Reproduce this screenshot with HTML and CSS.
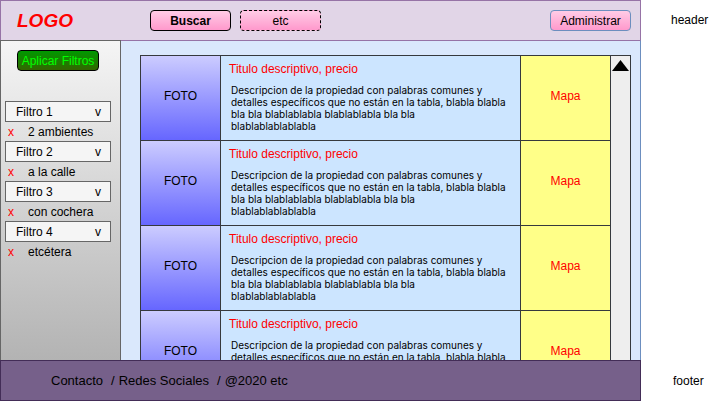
FILE: index.html
```html
<!DOCTYPE html>
<html lang="es">
<head>
<meta charset="utf-8">
<title>Buscador de propiedades</title>
<link rel="stylesheet" href="styles.css">
</head>
<body>
<div class="page">
  <header class="header">
    <a class="logo" href="#">LOGO</a>
    <nav class="nav">
      <button class="btn btn-active" type="button">Buscar</button>
      <button class="btn btn-dashed" type="button">etc</button>
    </nav>
    <button class="btn btn-admin" type="button">Administrar</button>
  </header>
  <div class="note">header</div>

  <div class="main">
    <aside class="sidebar">
      <button class="btn btn-apply" type="button">Aplicar Filtros</button>
      <div class="filters">
        <div class="filter">
          <select class="select" aria-label="Filtro 1"><option>Filtro 1</option></select>
          <span class="arrow">v</span>
        </div>
        <div class="chosen"><button class="remove" type="button" aria-label="Quitar 2 ambientes">x</button><span>2 ambientes</span></div>
        <div class="filter">
          <select class="select" aria-label="Filtro 2"><option>Filtro 2</option></select>
          <span class="arrow">v</span>
        </div>
        <div class="chosen"><button class="remove" type="button" aria-label="Quitar a la calle">x</button><span>a la calle</span></div>
        <div class="filter">
          <select class="select" aria-label="Filtro 3"><option>Filtro 3</option></select>
          <span class="arrow">v</span>
        </div>
        <div class="chosen"><button class="remove" type="button" aria-label="Quitar con cochera">x</button><span>con cochera</span></div>
        <div class="filter">
          <select class="select" aria-label="Filtro 4"><option>Filtro 4</option></select>
          <span class="arrow">v</span>
        </div>
        <div class="chosen"><button class="remove" type="button" aria-label="Quitar etcétera">x</button><span>etcétera</span></div>
      </div>
    </aside>

    <main class="content">
      <div class="results">
        <div class="list">
          <article class="item">
            <div class="photo">FOTO</div>
            <div class="info">
              <h2 class="title">Titulo descriptivo, precio</h2>
              <p class="text">Descripcion de la propiedad con palabras comunes y detalles específicos que no están en la tabla, blabla blabla bla bla blablablabla blablablabla bla bla<br>blablablablablabla</p>
            </div>
            <div class="map">Mapa</div>
          </article>
          <article class="item">
            <div class="photo">FOTO</div>
            <div class="info">
              <h2 class="title">Titulo descriptivo, precio</h2>
              <p class="text">Descripcion de la propiedad con palabras comunes y detalles específicos que no están en la tabla, blabla blabla bla bla blablablabla blablablabla bla bla<br>blablablablablabla</p>
            </div>
            <div class="map">Mapa</div>
          </article>
          <article class="item">
            <div class="photo">FOTO</div>
            <div class="info">
              <h2 class="title">Titulo descriptivo, precio</h2>
              <p class="text">Descripcion de la propiedad con palabras comunes y detalles específicos que no están en la tabla, blabla blabla bla bla blablablabla blablablabla bla bla<br>blablablablablabla</p>
            </div>
            <div class="map">Mapa</div>
          </article>
          <article class="item">
            <div class="photo">FOTO</div>
            <div class="info">
              <h2 class="title">Titulo descriptivo, precio</h2>
              <p class="text">Descripcion de la propiedad con palabras comunes y detalles específicos que no están en la tabla, blabla blabla bla bla blablablabla blablablabla bla bla<br>blablablablablabla</p>
            </div>
            <div class="map">Mapa</div>
          </article>
        </div>
        <div class="scrollbar">
          <button class="scroll-up" type="button" aria-label="Subir">
            <svg width="17" height="11" viewBox="0 0 17 11"><path d="M8.5 0L17 11H0Z"/></svg>
          </button>
        </div>
      </div>
    </main>
  </div>

  <footer class="footer">
    <a href="#">Contacto</a>
    <span class="sep">/</span>
    <a href="#">Redes Sociales</a>
    <span class="sep">/</span>
    <span>@2020 etc</span>
  </footer>
  <div class="note note-footer">footer</div>
</div>
</body>
</html>
```

FILE: styles.css
```css
* {
  box-sizing: border-box;
}

body {
  margin: 0;
  background: #fff;
  color: #000;
  font: 12px/14px "Liberation Sans", Arial, sans-serif;
}

a {
  color: inherit;
  text-decoration: none;
}

button,
select {
  margin: 0;
  padding: 0;
  color: inherit;
  font: inherit;
}

.page {
  display: grid;
  grid-template-columns: minmax(0, 1fr) 70px;
  grid-template-rows: 40px minmax(0, 1fr) 41px;
  height: 100vh;
}

.header {
  display: flex;
  align-items: center;
  padding: 0 9px 0 16px;
  border: 1px solid #9673a6;
  border-bottom: 0;
  background: #e1d5e7;
}

.logo {
  width: 133px;
  color: #f00;
  font-size: 19px;
  font-style: italic;
  font-weight: bold;
  line-height: 22px;
}

.nav {
  display: flex;
  flex: 1;
  gap: 9px;
}

.btn {
  height: 21px;
  border: 1px solid #000;
  border-radius: 4px;
  background: linear-gradient(#ffcce6, #ff99cc);
}

.nav .btn {
  width: 81px;
}

.btn-active {
  font-weight: bold;
}

.nav .btn-dashed {
  border-style: dashed;
}

.btn-admin {
  width: 81px;
  border-color: #6c8ebf;
}

.note {
  align-self: center;
  padding-left: 30px;
}

.note-footer {
  padding-left: 32px;
}

.main {
  grid-column: 1;
  display: flex;
  min-height: 0;
}

.sidebar {
  width: 121px;
  padding: 9px 9px 0 4px;
  border: 1px solid #666;
  border-bottom: 0;
  background: linear-gradient(#f5f5f5, #b3b3b3);
}

.btn-apply {
  display: block;
  width: 82px;
  margin: 0 0 30px 12px;
  background: linear-gradient(#009900, #336600);
  color: #0f0;
  white-space: nowrap;
}

.filter {
  position: relative;
}

.select {
  display: block;
  width: 100%;
  height: 21px;
  padding: 0 10px;
  border: 1px solid #666;
  border-radius: 0;
  appearance: none;
  background: #f5f5f5;
}

.arrow {
  position: absolute;
  top: 4px;
  right: 10px;
  pointer-events: none;
}

.chosen {
  display: flex;
  align-items: center;
  gap: 14px;
  height: 19px;
  padding-left: 3px;
}

.remove {
  border: 0;
  background: none;
  color: #f00;
}

.content {
  display: flex;
  flex: 1;
  min-width: 0;
  padding: 14px 9px 0 19px;
  border-top: 1px solid #9673a6;
  border-right: 1px solid #6c8ebf;
  background: #dae8fc;
}

.results {
  display: flex;
  flex: 1;
  min-width: 0;
  border: 1px solid #36393d;
  border-bottom: 0;
  overflow: hidden;
}

.list {
  flex: 1;
}

.item {
  display: flex;
  height: 85px;
  border-bottom: 1px solid #36393d;
}

.photo,
.map {
  display: flex;
  align-items: center;
  justify-content: center;
  padding-bottom: 4px;
}

.photo {
  width: 80px;
  border-right: 1px solid #36393d;
  background: linear-gradient(#ccccff, #6666ff);
}

.info {
  flex: 1;
  padding: 6px 8px 0 8px;
  background: #cce5ff;
}

.title {
  margin: 0 0 8px;
  color: #f00;
  font-size: 12px;
  font-weight: normal;
}

.text {
  margin: 0;
  padding-left: 2px;
  font-family: Inter, "Noto Sans", sans-serif;
  font-size: 10px;
  line-height: 12px;
}

.map {
  width: 90px;
  border-left: 1px solid #36393d;
  background: #ffff88;
  color: #f00;
}

.scrollbar {
  width: 20px;
  border-left: 1px solid #36393d;
  background: #eee;
}

.scroll-up {
  display: flex;
  width: 100%;
  padding: 4px 0 0 1px;
  border: 0;
  background: none;
}

.footer {
  grid-column: 1;
  display: flex;
  align-items: center;
  gap: 4px;
  padding-left: 50px;
  border: 1px solid #432d57;
  background: #76608a;
  font-size: 13px;
}

.sep {
  padding-left: 4px;
}
```
